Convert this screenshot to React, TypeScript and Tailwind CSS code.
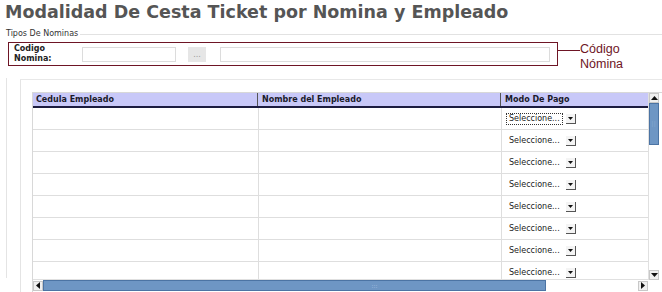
const rows = [0, 1, 2, 3, 4, 5, 6, 7];

function SelectBox({ focused }: { focused?: boolean }) {
  return (
    <div className="flex items-center h-[12px]">
      <span
        className={`text-[8px] leading-[10px] px-[2px] text-[#222] ${
          focused ? 'border border-dotted border-[#333]' : 'border border-transparent'
        }`}
      >
        Seleccione...
      </span>
      <span className="ml-[3px] w-[10px] h-[10px] bg-[#f4f4f4] border-r border-b border-[#555] flex items-center justify-center">
        <svg width="5" height="3" viewBox="0 0 5 3">
          <path d="M0 0h5L2.5 3z" fill="#111" />
        </svg>
      </span>
    </div>
  );
}

function Arrow({ dir }: { dir: 'up' | 'down' | 'left' | 'right' }) {
  const d = {
    up: 'M0 4h7L3.5 0z',
    down: 'M0 0h7L3.5 4z',
    left: 'M4 0v7L0 3.5z',
    right: 'M0 0v7L4 3.5z',
  }[dir];
  const vertical = dir === 'up' || dir === 'down';
  return (
    <div className="w-[10px] h-[10px] bg-[#f0f0f0] border border-[#c8c8c8] flex items-center justify-center shrink-0">
      <svg width={vertical ? 7 : 4} height={vertical ? 4 : 7} viewBox={vertical ? '0 0 7 4' : '0 0 4 7'}>
        <path d={d} fill="#111" />
      </svg>
    </div>
  );
}

export default function App() {
  return (
    <div className="w-[662px] h-[292px] overflow-hidden bg-white font-['DejaVu_Sans',sans-serif]">
      <h1 className="pl-[5px] pt-[1px] text-[17.5px] leading-[22px] font-bold text-[#555555]">
        Modalidad De Cesta Ticket por Nomina y Empleado
      </h1>

      {/* Tipos de nominas */}
      <div className="mt-[6px] flex items-center pl-[6px]">
        <span className="text-[8px] leading-[10px] text-[#333]">Tipos De Nominas</span>
        <div className="flex-1 h-px bg-[#e2e2e2] ml-[2px]" />
      </div>

      <div className="pl-[8px] mt-[3px] flex items-start">
        <div className="w-[550px] h-[24px] border border-[#6e1525] flex items-center">
          <div className="w-[73px] pl-[5px] text-[8px] leading-[10px] font-bold text-[#222]">
            Codigo
            <br />
            Nomina:
          </div>
          <div className="w-[94px] h-[15px] border border-[#dcdcdc] bg-white" />
          <div className="ml-[12px] w-[18px] h-[15px] bg-[#e6e6e6] text-[#999] text-[8px] leading-[15px] text-center">
            ...
          </div>
          <div className="ml-[14px] w-[330px] h-[15px] border border-[#dcdcdc] bg-white" />
        </div>
        <div className="mt-[8px] w-[22px] h-px bg-[#6e1525]" />
        <div className="text-[12.5px] leading-[15px] text-[#6e1525] font-['Liberation_Sans',sans-serif]">
          Código
          <br />
          Nómina
        </div>
      </div>

      {/* grid area */}
      <div className="mt-[6px] ml-[6px] border-l border-[#e4e4e4] h-[200px] pt-[1px]">
        <div className="h-px bg-[#e8e8e8] ml-[13px]" />
        <div className="ml-[13px] border-l border-[#e4e4e4] h-[230px] pt-[12px] pl-[11px]">
          <div className="border-l border-t border-[#d8d8d8] flex h-[200px]">
            <div className="w-[615px] flex flex-col">
              <div className="h-[186px] overflow-hidden">
                <div className="flex h-[15px] bg-[#c8c8f8] border-b-2 border-[#1c1c40] text-[8px] leading-[13px] font-bold text-[#1a1a2a]">
                  <div className="w-[225px] pl-[3px] border-r border-[#555]">Cedula Empleado</div>
                  <div className="w-[242px] pl-[3px] ml-px border-r border-[#555]">Nombre del Empleado</div>
                  <div className="flex-1 pl-[3px] ml-px">Modo De Pago</div>
                </div>
                {rows.map((r) => (
                  <div key={r} className="flex h-[22px] border-b border-[#dedede]">
                    <div className="w-[226px] border-r border-[#dedede]" />
                    <div className="w-[243px] border-r border-[#dedede]" />
                    <div className="flex-1 pl-[4px] flex items-center">
                      <SelectBox focused={r === 0} />
                    </div>
                  </div>
                ))}
              </div>
              {/* horizontal scrollbar */}
              <div className="h-[12px] flex items-center bg-white border-t border-[#e0e0e0]">
                <Arrow dir="left" />
                <div className="flex-1 h-[11px] flex">
                  <div className="w-[503px] h-full bg-[#6e96c4] border border-[#4c74a4] flex items-center justify-center">
                    <span className="text-[6px] leading-none text-[#a9c3e3] ml-[160px]">:::</span>
                  </div>
                </div>
                <Arrow dir="right" />
              </div>
            </div>
            {/* vertical scrollbar */}
            <div className="w-[11px] h-[187px] flex flex-col border-l border-[#e0e0e0]">
              <Arrow dir="up" />
              <div className="flex-1 flex flex-col">
                <div className="h-[42px] bg-[#6e96c4] border border-[#4c74a4] flex items-center justify-center">
                  <span className="text-[6px] leading-[3px] text-[#a9c3e3] [writing-mode:vertical-rl]">:::</span>
                </div>
              </div>
              <Arrow dir="down" />
            </div>
          </div>
        </div>
      </div>
    </div>
  );
}
